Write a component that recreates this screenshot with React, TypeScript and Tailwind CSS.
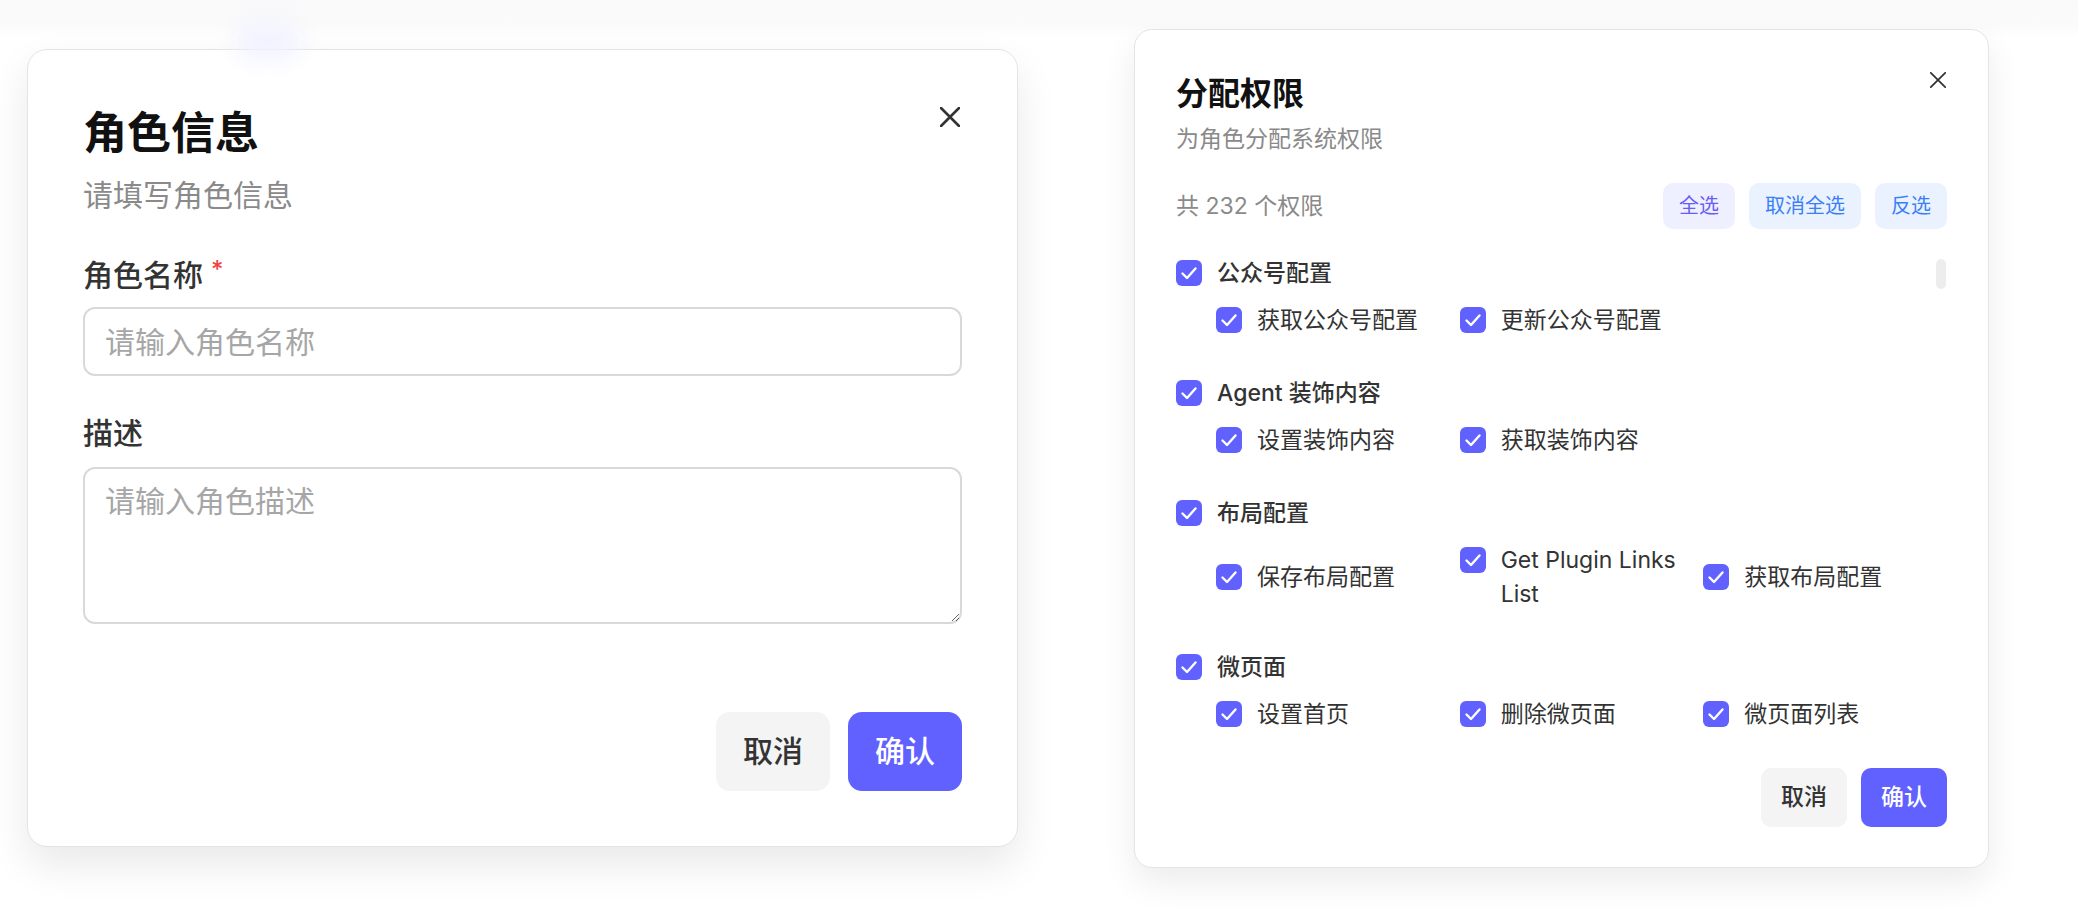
import React from "react";

const FONT = "font-['Inter','Noto_Sans_CJK_SC',sans-serif]";

function CloseIcon({ size, stroke }: { size: number; stroke: number }) {
  return (
    <svg width={size} height={size} viewBox="0 0 20 20" fill="none">
      <path d="M1 1L19 19M19 1L1 19" stroke="#333" strokeWidth={stroke} strokeLinecap="round" />
    </svg>
  );
}

function Check() {
  return (
    <span className="mt-[4px] flex h-[26px] w-[26px] shrink-0 items-center justify-center rounded-[6px] bg-[#6161ff]">
      <svg width="26" height="26" viewBox="0 0 26 26" fill="none">
        <path d="M6.5 13.5L11 18L19.5 8.5" stroke="#fff" strokeWidth="2.4" strokeLinecap="round" strokeLinejoin="round" />
      </svg>
    </span>
  );
}

function Item({ label }: { label: string }) {
  return (
    <div className="flex items-start gap-[15px] pr-[10px]">
      <Check />
      <span className="text-[23px] leading-[34px] text-[#333]">{label}</span>
    </div>
  );
}

const groups: { title: string; items: string[] }[] = [
  { title: "公众号配置", items: ["获取公众号配置", "更新公众号配置"] },
  { title: "Agent 装饰内容", items: ["设置装饰内容", "获取装饰内容"] },
  { title: "布局配置", items: ["保存布局配置", "Get Plugin Links List", "获取布局配置"] },
  { title: "微页面", items: ["设置首页", "删除微页面", "微页面列表"] },
];

function RoleDialog() {
  return (
    <div className="mt-[49px] flex w-[991px] flex-col rounded-[20px] border border-[#e4e4e4] bg-white p-[55px] shadow-[0_18px_40px_rgba(0,0,0,0.09)]">
      <div className="flex items-start justify-between">
        <h2 className="text-[44px] font-semibold leading-[57px] text-[#111]">角色信息</h2>
        <button className="mr-[2px] mt-[2px] flex h-[20px] w-[20px] items-center justify-center">
          <CloseIcon size={20} stroke={2.6} />
        </button>
      </div>
      <p className="mt-[11px] text-[30px] leading-[45px] text-[#8a8a8a]">请填写角色信息</p>
      <label className="mt-[35px] text-[30px] font-medium leading-[45px] text-[#333]">
        角色名称<span className="ml-[8px] align-top text-[24px] leading-[34px] text-[#f04444]">*</span>
      </label>
      <input
        className="mt-[9px] h-[69px] w-full rounded-[12px] border-2 border-[#d9d9d9] px-[20px] text-[30px] text-[#333] outline-none placeholder:text-[#a6a6a6]"
        placeholder="请输入角色名称"
      />
      <label className="mt-[35px] text-[30px] font-medium leading-[45px] text-[#333]">描述</label>
      <textarea
        className="mt-[11px] h-[157px] w-full rounded-[12px] border-2 border-[#d9d9d9] px-[20px] py-[10px] text-[30px] leading-[45px] text-[#333] outline-none placeholder:text-[#a6a6a6]"
        placeholder="请输入角色描述"
      />
      <div className="mt-[88px] flex justify-end gap-[18px]">
        <button className="h-[79px] w-[114px] rounded-[14px] bg-[#f4f4f4] text-[30px] font-medium text-[#333]">取消</button>
        <button className="h-[79px] w-[114px] rounded-[14px] bg-[#6161ff] text-[30px] font-medium text-white">确认</button>
      </div>
    </div>
  );
}

function PermDialog() {
  return (
    <div className="mt-[29px] flex w-[855px] flex-col rounded-[18px] border border-[#e4e4e4] bg-white px-[41px] pb-[40px] pt-[40px] shadow-[0_14px_34px_rgba(0,0,0,0.08)]">
      <div className="flex items-start justify-between">
        <h2 className="text-[32px] font-semibold leading-[48px] text-[#111]">分配权限</h2>
        <button className="mr-[1px] mt-[2px] flex h-[16px] w-[16px] items-center justify-center">
          <CloseIcon size={16} stroke={2.2} />
        </button>
      </div>
      <p className="mt-[4px] text-[23px] leading-[34px] text-[#8a8a8a]">为角色分配系统权限</p>
      <div className="mt-[27px] flex h-[46px] items-center justify-between">
        <span className="text-[23px] text-[#8a8a8a]">共 232 个权限</span>
        <div className="flex gap-[14px]">
          <button className="h-[46px] rounded-[10px] bg-[#eef0ff] px-[16px] text-[20px] text-[#6a5cf6]">全选</button>
          <button className="h-[46px] rounded-[10px] bg-[#eaf2ff] px-[16px] text-[20px] text-[#3a7ff5]">取消全选</button>
          <button className="h-[46px] rounded-[10px] bg-[#eaf2ff] px-[16px] text-[20px] text-[#3a7ff5]">反选</button>
        </div>
      </div>
      <div className="relative mt-[27px] h-[484px] overflow-hidden">
        <div className="flex flex-col gap-[39px]">
          {groups.map((g) => (
            <div key={g.title} className="flex flex-col">
              <div className="flex items-start gap-[15px]">
                <Check />
                <span className="text-[23px] font-medium leading-[34px] text-[#333]">{g.title}</span>
              </div>
              <div className="ml-[40px] mt-[13px] grid grid-cols-3 items-center gap-y-[12px]">
                {g.items.map((it) => (
                  <Item key={it} label={it} />
                ))}
              </div>
            </div>
          ))}
        </div>
        <div className="absolute right-[1px] top-[3px] h-[30px] w-[10px] rounded-full bg-[#ededed]" />
      </div>
      <div className="mt-[28px] flex justify-end gap-[14px]">
        <button className="h-[59px] w-[86px] rounded-[10px] bg-[#f4f4f4] text-[23px] font-medium text-[#333]">取消</button>
        <button className="h-[59px] w-[86px] rounded-[10px] bg-[#6161ff] text-[23px] font-medium text-white">确认</button>
      </div>
    </div>
  );
}

export default function App() {
  return (
    <div
      className={`${FONT} relative flex min-h-[910px] w-[2078px] items-start gap-[116px] bg-[linear-gradient(#f9f9fa_0px,#fbfbfb_26px,#ffffff_38px)] pl-[27px]`}
    >
      <div className="pointer-events-none absolute left-[235px] top-[24px] h-[34px] w-[66px] rounded-full bg-[#f0f1ff] blur-[12px]" />
      <RoleDialog />
      <PermDialog />
    </div>
  );
}
